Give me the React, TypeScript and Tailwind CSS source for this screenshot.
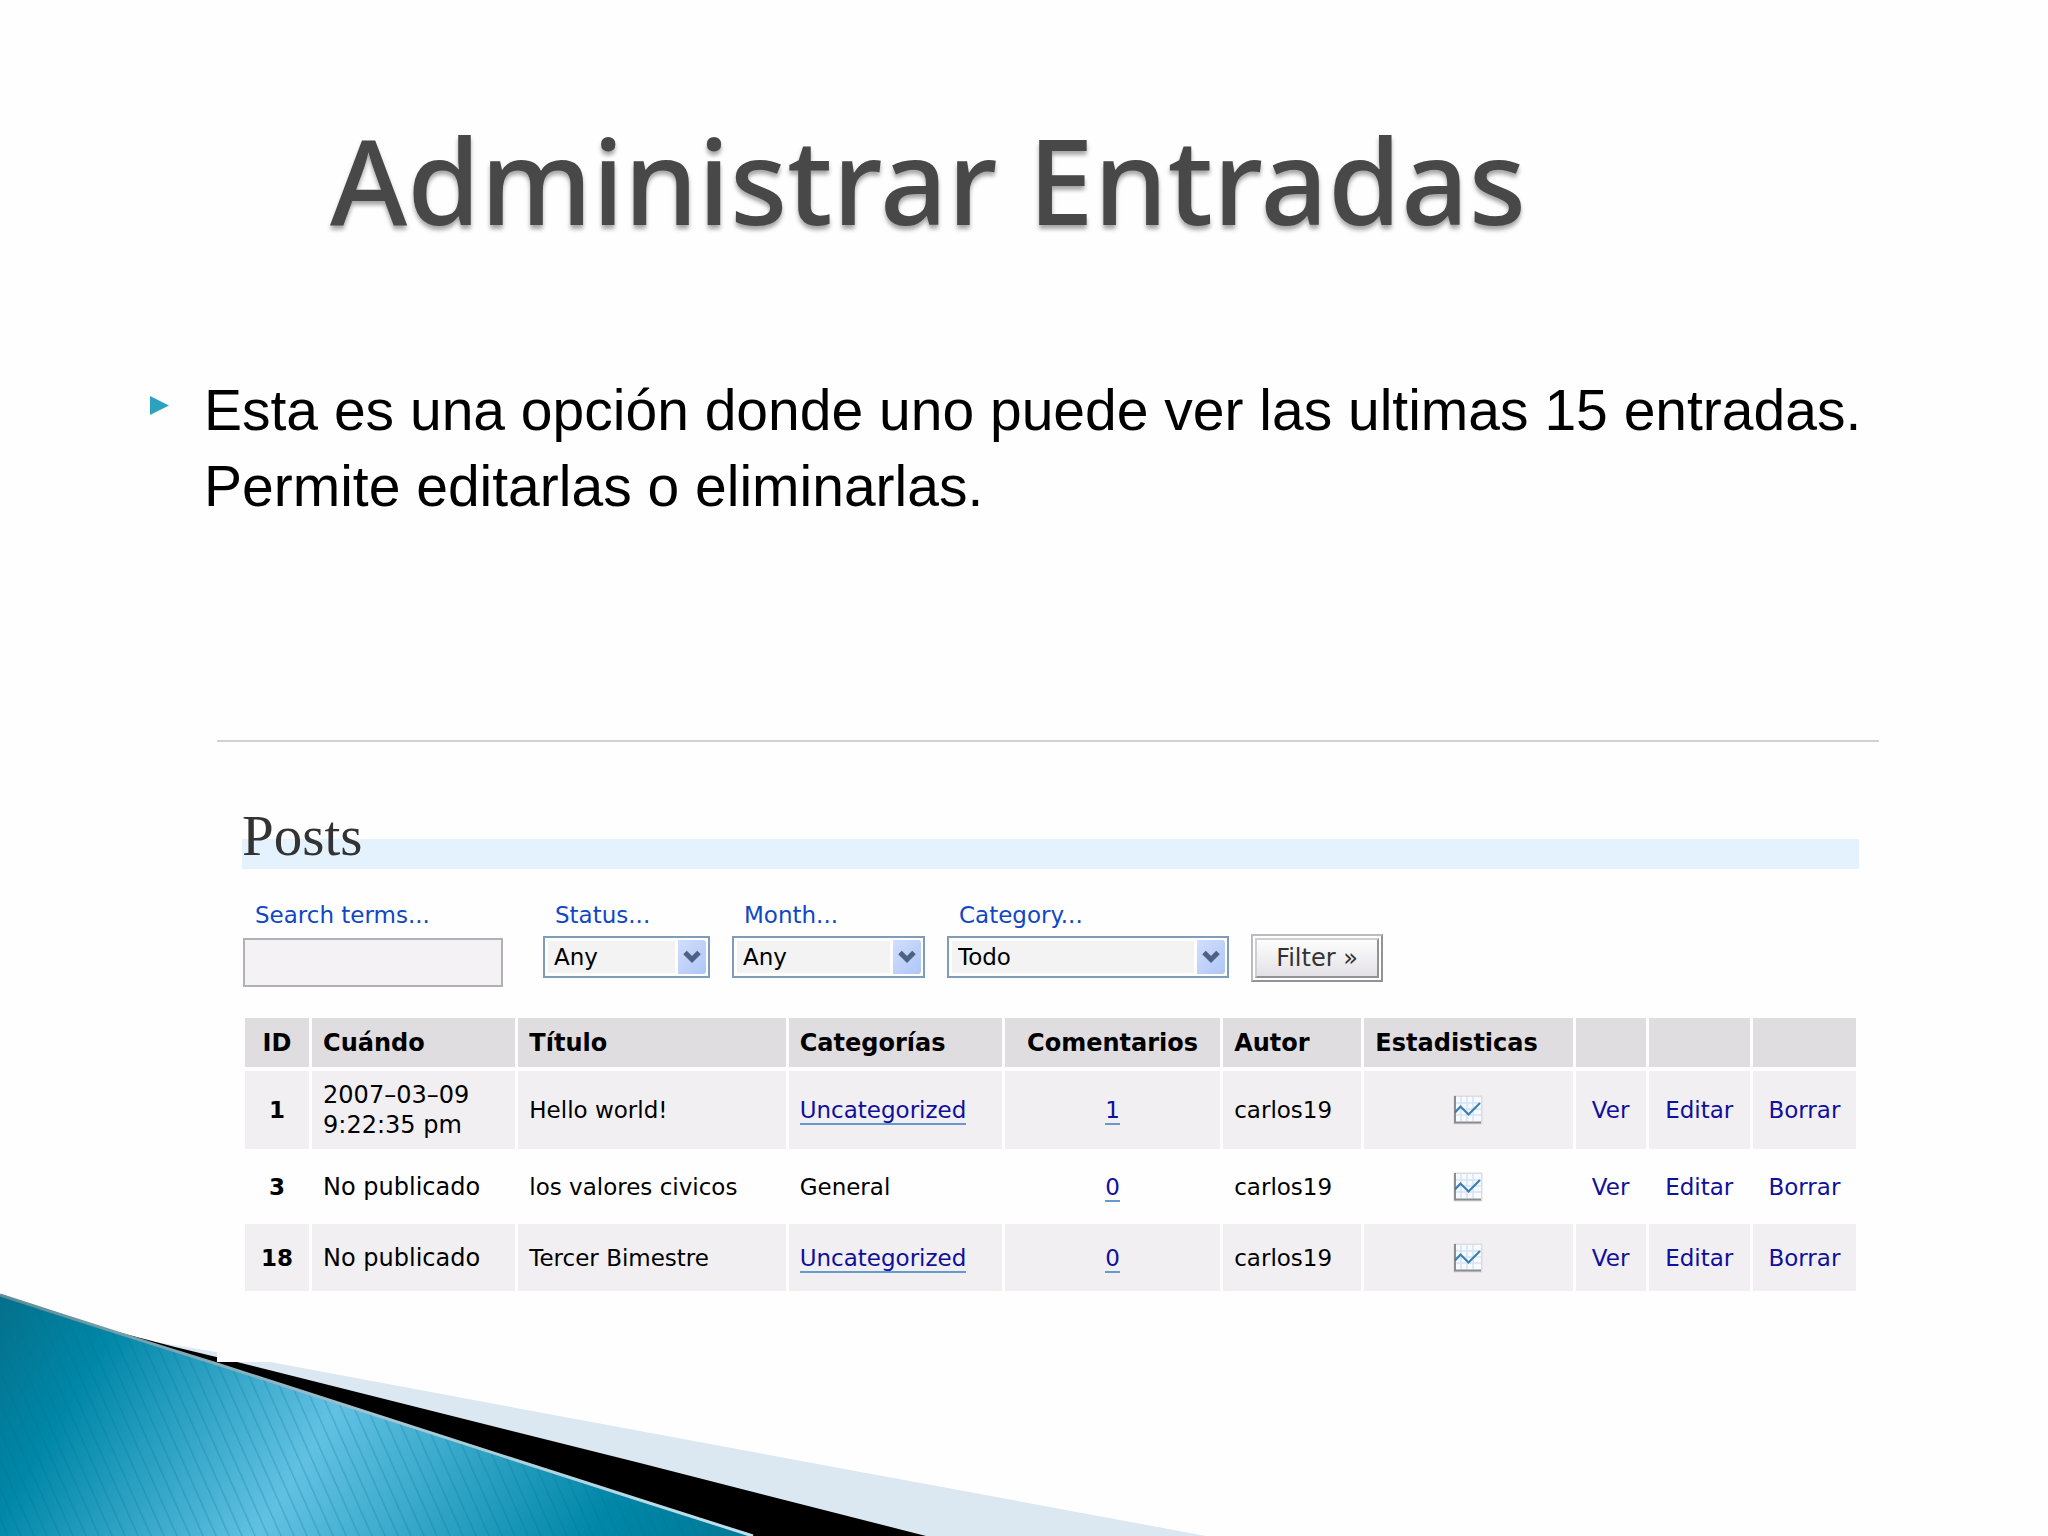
import type { ReactNode } from "react";

type Post = {
  id: number;
  when: string[];
  title: string;
  category: string;
  categoryLinked: boolean;
  comments: number;
  author: string;
};

const posts: Post[] = [
  { id: 1, when: ["2007–03–09", "9:22:35 pm"], title: "Hello world!", category: "Uncategorized", categoryLinked: true, comments: 1, author: "carlos19" },
  { id: 3, when: ["No publicado"], title: "los valores civicos", category: "General", categoryLinked: false, comments: 0, author: "carlos19" },
  { id: 18, when: ["No publicado"], title: "Tercer Bimestre", category: "Uncategorized", categoryLinked: true, comments: 0, author: "carlos19" },
];

const actions = ["Ver", "Editar", "Borrar"];

function SelectField({ id, label, value, width }: { id: string; label: string; value: string; width: string }) {
  return (
    <div className="flex flex-col gap-[6px]">
      <label htmlFor={id} className="pl-3 text-[#1146c4]">{label}</label>
      <div className={`relative ${width}`}>
        <select
          id={id}
          className="block h-[42px] w-full appearance-none border-2 border-[#7f9db9] bg-[#f4f3f4] pl-[9px] text-black shadow-[inset_0_0_0_3px_#fff]"
        >
          <option>{value}</option>
        </select>
        <span className="pointer-events-none absolute inset-y-1 right-1 flex w-[31px] items-center justify-center rounded-[3px] border-l-3 border-white bg-linear-to-br from-[#d2defc] to-[#aec6f7]">
          <svg viewBox="0 0 18 14" className="h-[14px] w-[18px]" fill="none" stroke="#4d6185" strokeWidth="5">
            <path d="M2 2.5 L9 9.5 L16 2.5" />
          </svg>
        </span>
      </div>
    </div>
  );
}

function ChartIcon() {
  return (
    <svg viewBox="0 0 30 30" className="inline-block size-[30px]">
      <rect x="0.5" y="0.5" width="29" height="29" fill="#dddce0" />
      <rect x="2" y="2" width="26" height="25" fill="#f7fbff" />
      <path d="M8 2V26M14 2V26M20 2V26M2 8H28M2 14H28M2 20H28" stroke="#d5e4f5" strokeWidth="1.5" />
      <path d="M2 1V27.5H28" fill="none" stroke="#8b8b90" strokeWidth="2" />
      <path d="M2 17.5L7.500 11.500L15.500 19.500L27 8" fill="none" stroke="#3d7fae" strokeWidth="2.200" />
    </svg>
  );
}

function Wave() {
  return (
    <svg viewBox="0 0 1220 250" className="absolute bottom-0 left-0 h-[250px] w-[1220px]" aria-hidden="true">
      <defs>
        <linearGradient id="sea" gradientUnits="userSpaceOnUse" x1="0" y1="9" x2="653" y2="412">
          <stop offset="0" stopColor="#04708b" />
          <stop offset="0.15" stopColor="#0087a8" />
          <stop offset="0.45" stopColor="#62c1e3" />
          <stop offset="0.82" stopColor="#0087a8" />
          <stop offset="1" stopColor="#007996" />
        </linearGradient>
        <linearGradient id="edge" x1="0" x2="1" y1="0" y2="0">
          <stop offset="0" stopColor="#5f8c98" />
          <stop offset="0.5" stopColor="#a3c4d0" />
          <stop offset="1" stopColor="#c3e2ee" />
        </linearGradient>
        <pattern id="stripes" width="13" height="20" patternUnits="userSpaceOnUse" patternTransform="skewX(24)">
          <rect width="1.500" height="20" fill="#006f90" fillOpacity="0.28" />
        </pattern>
      </defs>
      <path d="M150 55 L216 66 L640 145 L1206 250 H700 Z" fill="#dbe8f1" />
      <path d="M110 44 L175 61 L237 76 L640 177 L926 250 H740 Z" fill="#000" />
      <path d="M0 9 Q110 45 217 78 L640 214 L753 250 H0 Z" fill="url(#sea)" />
      <path d="M0 9 Q110 45 217 78 L640 214 L753 250 H0 Z" fill="url(#stripes)" />
      <path d="M0 9 Q110 45 217 78 L640 214 L753 250" fill="none" stroke="url(#edge)" strokeWidth="3" />
    </svg>
  );
}

function Th({ children, center = false }: { children?: ReactNode; center?: boolean }) {
  return (
    <th className={`h-[49px] bg-[#e0dde1] text-[24px] font-bold ${center ? "text-center" : "pl-[11px] text-left"}`}>
      {children}
    </th>
  );
}

function PostRow({ post, shaded }: { post: Post; shaded: boolean }) {
  return (
    <tr className={`text-center ${post.when.length > 1 ? "h-[78px]" : "h-[67px]"} ${shaded ? "[&>*]:bg-[#f1eff2]" : ""}`}>
      <th scope="row" className="font-bold">{post.id}</th>
      <td className="pl-[11px] text-left text-[24px]">
        {post.when.map((line) => (
          <div key={line}>{line}</div>
        ))}
      </td>
      <td className="pl-[11px] text-left">{post.title}</td>
      <td className="pl-[11px] text-left">
        {post.categoryLinked ? (
          <a href="#" className="border-b-2 border-[#6699cc] text-[#10109a]">{post.category}</a>
        ) : (
          post.category
        )}
      </td>
      <td>
        <a href="#" className="border-b-2 border-[#6699cc] text-[#10109a]">{post.comments}</a>
      </td>
      <td className="pl-[11px] text-left">{post.author}</td>
      <td>
        <a href="#" aria-label="Estadisticas" className="flex justify-center">
          <ChartIcon />
        </a>
      </td>
      {actions.map((action) => (
        <td key={action}>
          <a href="#" className="text-[#10109a]">{action}</a>
        </td>
      ))}
    </tr>
  );
}

export default function App() {
  return (
    <div className="relative min-h-screen overflow-hidden bg-[#fefefe]">
      <Wave />
      <main className="relative pt-[100px]">
        <h1 className="pl-[330px] font-['Noto_Sans'] text-[118px] leading-[160px] font-medium text-[#484848] [text-shadow:0_4px_4px_rgba(0,0,0,0.35)]">
          Administrar Entradas
        </h1>

        <ul className="mt-[112px] pl-[150px]">
          <li className="flex gap-[35px] font-['Liberation_Sans'] text-[57px] leading-[76px] text-black">
            <svg viewBox="0 0 19 19" className="mt-6 size-[19px] shrink-0" aria-hidden="true">
              <path d="M0 0L19 9.500L0 19Z" fill="#2da2bf" />
            </svg>
            <p>
              Esta es una opción donde uno puede ver las ultimas 15 entradas.
              <br />
              Permite editarlas o eliminarlas.
            </p>
          </li>
        </ul>

        <section className="mt-[216px] mr-[169px] ml-[217px] border-t-2 border-[#cfd0d2] bg-[#fefefe] pt-[61px] pr-[20px] pb-[67px] pl-[25px] font-['DejaVu_Sans'] text-[23px] leading-[30px] text-black">
          <h2 className="bg-[linear-gradient(to_top,#e4f2fd_30px,transparent_30px)] font-['Liberation_Serif'] text-[57px] leading-[66px] text-[#333]">
            Posts
          </h2>

          <form className="mt-[31px] flex items-start gap-[22px] pl-px">
            <div className="mr-[18px] flex flex-col gap-2">
              <label htmlFor="terms" className="pl-3 text-[#1146c4]">Search terms...</label>
              <input id="terms" type="text" className="h-[49px] w-[260px] border-2 border-[#b2b0b4] bg-[#f4f2f5] px-2" />
            </div>
            <SelectField id="status" label="Status..." value="Any" width="w-[167px]" />
            <SelectField id="month" label="Month..." value="Any" width="w-[193px]" />
            <SelectField id="category" label="Category..." value="Todo" width="w-[282px]" />
            <button
              type="button"
              className="mt-[34px] w-[132px] border-2 border-t-[#bcbcc0] border-r-[#929297] border-b-[#929297] border-l-[#bcbcc0] bg-white p-[2px] text-[24px] text-[#333]"
            >
              <span className="block border-2 border-t-[#cfcfd2] border-r-[#929297] border-b-[#929297] border-l-[#cfcfd2] bg-linear-to-b from-[#fdfdfd] to-[#e3e1e6] py-[3px]">
                Filter »
              </span>
            </button>
          </form>

          <table className="mt-[27px] w-full table-fixed border-separate border-spacing-x-[3px] border-spacing-y-1">
            <colgroup>
              <col className="w-[64px]" />
              <col className="w-[203px]" />
              <col className="w-[267px]" />
              <col className="w-[213px]" />
              <col className="w-[215px]" />
              <col className="w-[138px]" />
              <col className="w-[208px]" />
              <col className="w-[70px]" />
              <col className="w-[101px]" />
              <col className="w-[103px]" />
            </colgroup>
            <thead>
              <tr>
                <Th center>ID</Th>
                <Th>Cuándo</Th>
                <Th>Título</Th>
                <Th>Categorías</Th>
                <Th center>Comentarios</Th>
                <Th>Autor</Th>
                <Th>Estadisticas</Th>
                <Th />
                <Th />
                <Th />
              </tr>
            </thead>
            <tbody>
              {posts.map((post, i) => (
                <PostRow key={post.id} post={post} shaded={i % 2 === 0} />
              ))}
            </tbody>
          </table>
        </section>
      </main>
    </div>
  );
}
